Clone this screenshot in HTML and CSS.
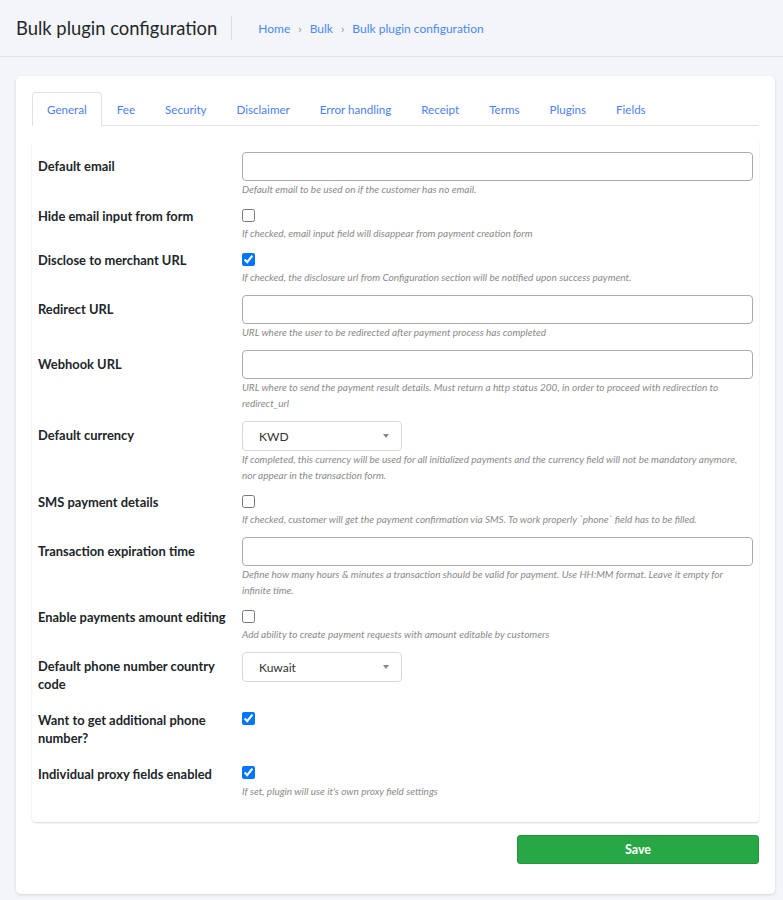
FILE: index.html
```html
<!DOCTYPE html>
<html lang="en">
<head>
<meta charset="utf-8">
<title>Bulk plugin configuration</title>
<link rel="stylesheet" href="styles.css">
</head>
<body>
<header class="page-header">
  <h1 class="page-title">Bulk plugin configuration</h1>
  <span class="header-divider"></span>
  <nav class="breadcrumb">
    <a href="#">Home</a><span class="sep">›</span><a href="#">Bulk</a><span class="sep">›</span><a href="#">Bulk plugin configuration</a>
  </nav>
</header>

<main class="content">
  <section class="card">
    <ul class="tabs">
      <li class="tab active">General</li>
      <li class="tab">Fee</li>
      <li class="tab">Security</li>
      <li class="tab">Disclaimer</li>
      <li class="tab">Error handling</li>
      <li class="tab">Receipt</li>
      <li class="tab">Terms</li>
      <li class="tab">Plugins</li>
      <li class="tab">Fields</li>
    </ul>

    <form class="panel">
      <div class="row">
        <label class="label">Default email</label>
        <div class="field">
          <input class="input" type="text">
          <div class="hint">Default email to be used on if the customer has no email.</div>
        </div>
      </div>

      <div class="row">
        <label class="label check-label">Hide email input from form</label>
        <div class="field">
          <div class="check-line"><input type="checkbox"></div>
          <div class="hint">If checked, email input field will disappear from payment creation form</div>
        </div>
      </div>

      <div class="row">
        <label class="label check-label">Disclose to merchant URL</label>
        <div class="field">
          <div class="check-line"><input type="checkbox" checked></div>
          <div class="hint">If checked, the disclosure url from Configuration section will be notified upon success payment.</div>
        </div>
      </div>

      <div class="row">
        <label class="label">Redirect URL</label>
        <div class="field">
          <input class="input" type="text">
          <div class="hint">URL where the user to be redirected after payment process has completed</div>
        </div>
      </div>

      <div class="row">
        <label class="label">Webhook URL</label>
        <div class="field">
          <input class="input" type="text">
          <div class="hint">URL where to send the payment result details. Must return a http status 200, in order to proceed with redirection to redirect_url</div>
        </div>
      </div>

      <div class="row">
        <label class="label">Default currency</label>
        <div class="field">
          <div class="select"><span>KWD</span><span class="caret"></span></div>
          <div class="hint">If completed, this currency will be used for all initialized payments and the currency field will not be mandatory anymore, nor appear in the transaction form.</div>
        </div>
      </div>

      <div class="row">
        <label class="label check-label">SMS payment details</label>
        <div class="field">
          <div class="check-line"><input type="checkbox"></div>
          <div class="hint">If checked, customer will get the payment confirmation via SMS. To work properly `phone` field has to be filled.</div>
        </div>
      </div>

      <div class="row">
        <label class="label">Transaction expiration time</label>
        <div class="field">
          <input class="input" type="text">
          <div class="hint">Define how many hours &amp; minutes a transaction should be valid for payment. Use HH:MM format. Leave it empty for infinite time.</div>
        </div>
      </div>

      <div class="row">
        <label class="label check-label">Enable payments amount editing</label>
        <div class="field">
          <div class="check-line"><input type="checkbox"></div>
          <div class="hint">Add ability to create payment requests with amount editable by customers</div>
        </div>
      </div>

      <div class="row">
        <label class="label">Default phone number country code</label>
        <div class="field">
          <div class="select"><span>Kuwait</span><span class="caret"></span></div>
        </div>
      </div>

      <div class="row">
        <label class="label check-label">Want to get additional phone number?</label>
        <div class="field">
          <div class="check-line"><input type="checkbox" checked></div>
        </div>
      </div>

      <div class="row">
        <label class="label check-label">Individual proxy fields enabled</label>
        <div class="field">
          <div class="check-line"><input type="checkbox" checked></div>
          <div class="hint">If set, plugin will use it's own proxy field settings</div>
        </div>
      </div>
    </form>

    <div class="actions">
      <button class="btn-save" type="button">Save</button>
    </div>
  </section>
</main>
</body>
</html>
```

FILE: styles.css
```css
* { box-sizing: border-box; }

html, body {
  margin: 0;
  padding: 0;
  background: #f4f5f9;
  font-family: "Lato", "Noto Sans", sans-serif;
  color: #212529;
}

.page-header {
  height: 57px;
  display: flex;
  align-items: center;
  padding: 0 16px;
  border-bottom: 1px solid #e2e3e8;
  background: #f4f5f9;
}

.page-title {
  margin: 0;
  font-size: 18.4px;
  font-weight: 400;
  color: #23272b;
}

.header-divider {
  width: 1px;
  height: 24px;
  background: #d9dbe0;
  margin: 0 26px 0 14px;
}

.breadcrumb {
  display: flex;
  align-items: center;
  font-size: 12px;
}

.breadcrumb a {
  color: #4a88f2;
  text-decoration: none;
}

.breadcrumb .sep {
  color: #8a8f99;
  margin: 0 8px;
  font-size: 12px;
}

.content {
  padding: 19px 8px 8px 16px;
}

.card {
  background: #fff;
  border-radius: 5px;
  box-shadow: 0 1px 3px rgba(0, 0, 0, 0.14);
  padding: 16px 16px 30px 16px;
}

.tabs {
  list-style: none;
  margin: 0;
  padding: 0;
  display: flex;
  border-bottom: 1px solid #dfe2e6;
}

.tab {
  height: 33px;
  line-height: 33px;
  padding: 0 14px;
  font-size: 11.6px;
  color: #4a7ff5;
  border: 1px solid transparent;
  border-bottom: none;
  margin-bottom: -1px;
  border-radius: 4px 4px 0 0;
}

.tab.active {
  border-color: #dfe2e6;
  background: #fff;
  height: 34px;
}

.panel {
  margin-top: 14px;
  padding: 12px 6px 13px 6px;
  border-radius: 4px;
  box-shadow: 0 1px 2px rgba(0, 0, 0, 0.16);
}

.row {
  display: grid;
  grid-template-columns: 204px 1fr;
  margin-bottom: 10px;
}

.label {
  font-size: 12.9px;
  font-weight: 700;
  line-height: 18.5px;
  padding-top: 4.5px;
  margin-bottom: 7px;
  padding-right: 10px;
  color: #212529;
}

.label.check-label {
  padding-top: 0;
}

.field {
  min-width: 0;
}

.input {
  display: block;
  width: 100%;
  height: 29px;
  border: 1px solid #ababab;
  border-radius: 4px;
  background: #fff;
  font: inherit;
}

.check-line {
  height: 18px;
  display: flex;
  align-items: flex-start;
}

.check-line input {
  margin: 1.5px 0 0 0;
  width: 13px;
  height: 13px;
}

.hint {
  font-size: 10px;
  font-style: italic;
  line-height: 16px;
  color: #8a8a8a;
}

.select {
  width: 160px;
  height: 30px;
  border: 1px solid #d6d8dc;
  border-radius: 4px;
  display: flex;
  align-items: center;
  justify-content: space-between;
  padding: 0 12px 0 16px;
  font-size: 12px;
  color: #333;
}

.caret {
  width: 0;
  height: 0;
  border-left: 3.5px solid transparent;
  border-right: 3.5px solid transparent;
  border-top: 4px solid #888;
}

.actions {
  display: flex;
  justify-content: flex-end;
  margin-top: 13px;
}

.btn-save {
  width: 242px;
  height: 29px;
  border: 1px solid #23963d;
  border-radius: 3px;
  background: #28a745;
  color: #fff;
  font-family: inherit;
  font-size: 12.5px;
  font-weight: 700;
}
```
